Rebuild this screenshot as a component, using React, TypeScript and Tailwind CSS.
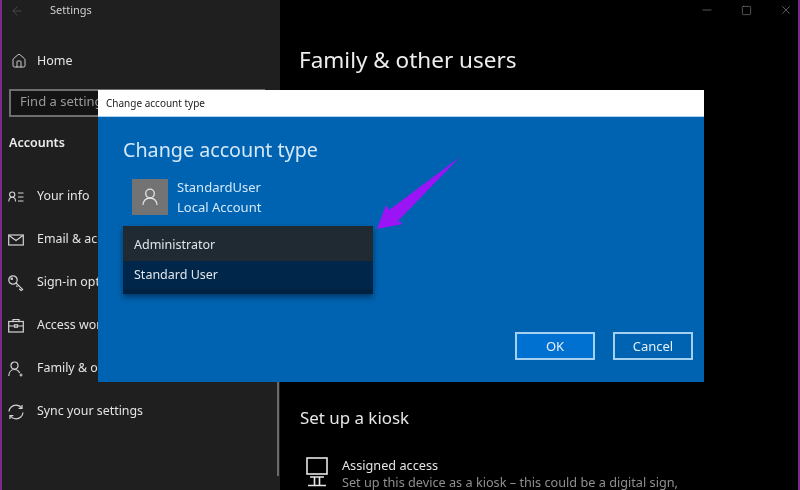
import React from 'react'
import { ArrowLeft, House, Minus, Square, X } from 'lucide-react'

function YourInfoIcon() {
  return (
    <svg width="16" height="16" viewBox="0 0 16 16" fill="none" stroke="currentColor" strokeWidth="1.1">
      <circle cx="4.200" cy="5.600" r="2.600" />
      <path d="M0.800 12.500c0-2.600 1.400-4.200 3.400-4.200s3.400 1.600 3.400 4.200" />
      <path d="M10 4h5.500M10 8h5.500M10 12h5.500" />
    </svg>
  )
}

function EmailIcon() {
  return (
    <svg width="16" height="16" viewBox="0 0 16 16" fill="none" stroke="currentColor" strokeWidth="1.200">
      <rect x="0.700" y="3" width="14.600" height="10" />
      <path d="M1 3.500l7 5 7-5" />
    </svg>
  )
}

function KeyIcon() {
  return (
    <svg width="16" height="16" viewBox="0 0 16 16" fill="none" stroke="currentColor" strokeWidth="1.200">
      <circle cx="5" cy="5" r="4.200" />
      <circle cx="3.800" cy="3.800" r="0.700" />
      <path d="M8 8l6.600 6.400-1.400 1.200-2-1.800M9.500 11.800l-1.200-1.200" />
    </svg>
  )
}

function BriefcaseIcon() {
  return (
    <svg width="16" height="16" viewBox="0 0 16 16" fill="none" stroke="currentColor" strokeWidth="1.200">
      <rect x="0.700" y="3.500" width="14.600" height="10.500" />
      <path d="M5 3.500V1.500h6v2M1 8h5.500M9.500 8H15M6.500 6.800h3v2.400h-3z" />
    </svg>
  )
}

function FamilyIcon() {
  return (
    <svg width="16" height="16" viewBox="0 0 16 16" fill="none" stroke="currentColor" strokeWidth="1.200">
      <circle cx="6.500" cy="4.500" r="3.500" />
      <path d="M0.800 15c0-3.800 2.400-6.500 5.700-6.500 2.400 0 4.200 1.300 5.100 3.400" />
      <path d="M13 12.500v3M11.500 14h3" />
    </svg>
  )
}

function SyncIcon() {
  return (
    <svg width="16" height="16" viewBox="0 0 16 16" fill="none" stroke="currentColor" strokeWidth="1.200">
      <path d="M1 7.500C1.300 3.800 4.300 1.200 8 1.200c2.300 0 4.300 1 5.600 2.800" />
      <path d="M14 1v3.400h-3.400" />
      <path d="M15 8.500c-.3 3.700-3.300 6.300-7 6.300-2.300 0-4.300-1-5.600-2.800" />
      <path d="M2 15v-3.400h3.400" />
    </svg>
  )
}

function AvatarIcon() {
  return (
    <svg width="16" height="18" viewBox="0 0 16 18" fill="none" stroke="currentColor" strokeWidth="1.300">
      <circle cx="8" cy="5.500" r="4.300" />
      <path d="M1 17c0-4 2.800-7 7-7s7 3 7 7" />
    </svg>
  )
}

function KioskIcon() {
  return (
    <svg width="22" height="30" viewBox="0 0 22 30" fill="none" stroke="currentColor" strokeWidth="1.600" className="text-[#e6e6e6]">
      <rect x="1" y="1" width="20" height="16" />
      <path d="M4 20h14M8.500 20v8M13.500 20v8M2 28.500h18" />
    </svg>
  )
}

const navItems = [
  { label: 'Your info', icon: <YourInfoIcon /> },
  { label: 'Email & accounts', icon: <EmailIcon /> },
  { label: 'Sign-in options', icon: <KeyIcon /> },
  { label: 'Access work or school', icon: <BriefcaseIcon /> },
  { label: 'Family & other users', icon: <FamilyIcon /> },
  { label: 'Sync your settings', icon: <SyncIcon /> },
]

function Sidebar() {
  return (
    <aside className="relative w-[280px] h-full shrink-0 bg-[#1f1f1f] border-l-2 border-[#7a2a8c] text-[#e4e4e4]">
      <div className="h-[21px] flex items-center pl-[8px] text-[#4d4d4d]">
        <ArrowLeft size={14} strokeWidth={1.5} />
        <span className="ml-[26px] text-[11px] text-[#cfcfcf]">Settings</span>
      </div>
      <div className="mt-[19px] h-[42px] flex items-center pl-[9px] text-[12.500px]">
        <House size={16} strokeWidth={1.300} />
        <span className="ml-[10px]">Home</span>
      </div>
      <div className="mt-[7px] ml-[7px] w-[256px] h-[28px] bg-[#141414] border-2 border-[#6e6e6e] flex items-center pl-[9px] pb-[2px] text-[13px] text-[#9a9a9a]">
        Find a setting
      </div>
      <div className="mt-[16px] pl-[7px] text-[12.500px] font-semibold text-[#ececec] leading-[20px]">Accounts</div>
      <nav className="mt-[22px] flex flex-col">
        {navItems.map(item => (
          <div key={item.label} className="h-[43px] flex items-center pl-[6px] text-[12.400px] whitespace-nowrap">
            <span className="w-[16px] flex justify-center text-[#d4d4d4]">{item.icon}</span>
            <span className="ml-[13px]">{item.label}</span>
          </div>
        ))}
      </nav>
      <div className="absolute right-[1px] top-[380px] bottom-[14px] w-[2px] bg-[#6a6a6a]" />
    </aside>
  )
}

function MainPane() {
  return (
    <main className="relative flex-1 h-full bg-black border-r-2 border-[#7a2a8c] text-white pl-[19px]">
      <div className="absolute top-[3px] right-[5px] flex items-center gap-[27px] text-[#808080]">
        <Minus size={14} strokeWidth={1.200} />
        <Square size={11} strokeWidth={1.400} />
        <X size={14} strokeWidth={1.200} />
      </div>
      <h1 className="pt-[44px] text-[22.500px] leading-[32px] text-[#ededed]">Family &amp; other users</h1>
      <h2 className="mt-[330px] ml-[1px] text-[16.900px] leading-[24px] text-[#e6e6e6]">Set up a kiosk</h2>
      <div className="mt-[27px] pl-[7px] flex">
        <KioskIcon />
        <div className="ml-[14px] text-[12.700px] leading-[17px] whitespace-nowrap">
          <div className="text-[#e4e4e4]">Assigned access</div>
          <div className="text-[#8f8f8f]">Set up this device as a kiosk – this could be a digital sign,</div>
        </div>
      </div>
    </main>
  )
}

function Dialog() {
  return (
    <div className="absolute left-[98px] top-[90px] w-[606px] h-[292px] flex flex-col bg-[#0063b1] text-white">
      <div className="h-[27px] bg-white border-b border-[#a9d3f2] flex items-center pl-[8px] text-[10px] text-[#222]">Change account type</div>
      <div className="flex-1 flex flex-col pl-[25px] pr-[11px]">
        <div className="pt-[19px] text-[19.700px] leading-[28px] text-[#d3e8f8]">Change account type</div>
        <div className="mt-[13px] ml-[9px] flex items-center">
          <div className="w-[36px] h-[36px] bg-[#737373] flex items-center justify-center text-[#e4e4e4]">
            <AvatarIcon />
          </div>
          <div className="ml-[9px] text-[13px] leading-[20px] text-[#d3e8f8]">
            <div>StandardUser</div>
            <div>Local Account</div>
          </div>
        </div>
        <div className="mt-[9px] w-[250px] h-[68px] bg-[#00213f] shadow-[0_3px_6px_rgba(0,0,0,0.45)] text-[12.500px] text-[#e0e6ea]">
          <div className="h-[35px] pt-[3px] bg-[#1f2a33] flex items-center pl-[11px]">Administrator</div>
          <div className="h-[28px] bg-[#00264a] flex items-center pl-[11px]">Standard User</div>
        </div>
        <div className="mt-auto mb-[22px] flex justify-end gap-[18px] text-[13px] text-[#e3f0fa]">
          <button className="w-[80px] h-[28px] pt-[1px] bg-[#0071d1] border-2 border-[#a5d0f0]">OK</button>
          <button className="w-[80px] h-[28px] pt-[1px] border-2 border-[#a5d0f0]">Cancel</button>
        </div>
      </div>
    </div>
  )
}

function PurpleArrow() {
  return (
    <svg className="absolute left-[370px] top-[150px]" width="100" height="90" viewBox="370 150 100 90">
      <polygon points="460,157 389,210 386,205 377,229 403,224 398,221" fill="#9b14f5" />
    </svg>
  )
}

export default function App() {
  return (
    <div className="relative w-[800px] h-[490px] overflow-hidden flex font-['Noto_Sans',sans-serif] blur-[0.4px]">
      <Sidebar />
      <MainPane />
      <Dialog />
      <PurpleArrow />
    </div>
  )
}
